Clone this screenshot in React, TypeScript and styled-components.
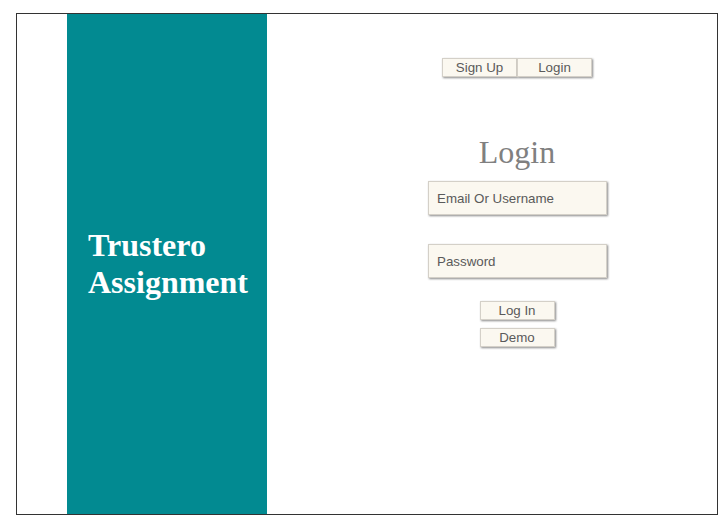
import React from "react";
import styled, { createGlobalStyle } from "styled-components";

const Global = createGlobalStyle`
  html, body { margin: 0; padding: 0; background: #fff; }
  body { font-family: "Liberation Serif", "Times New Roman", serif; }
`;

const Frame = styled.div`
  box-sizing: border-box;
  margin: 13px 0 0 16px;
  width: 702px;
  height: 502px;
  border: 1px solid #333;
  display: flex;
  padding-left: 50px;
  overflow: hidden;
`;

const Brand = styled.div`
  width: 200px;
  flex: none;
  background: #028a91;
  display: flex;
  align-items: center;
  padding-left: 21px;
  box-sizing: border-box;
`;

const BrandTitle = styled.h1`
  margin: 0;
  color: #fff;
  font-family: "Liberation Serif", "Times New Roman", serif;
  font-weight: bold;
  font-size: 32px;
  line-height: 37px;
`;

const Main = styled.div`
  flex: 1;
  padding-left: 50px;
  display: flex;
  flex-direction: column;
  align-items: center;
`;

const Tabs = styled.div`
  display: flex;
  margin-top: 44px;
`;

const CreamButton = styled.button<{ $w?: number }>`
  box-sizing: border-box;
  width: ${(p) => p.$w ?? 75}px;
  height: 19px;
  padding: 0;
  background: #fbf8f0;
  border: 1px solid #d4d0c8;
  box-shadow: 1px 1px 2px #8a8a8a;
  font-family: "Liberation Sans", Arial, sans-serif;
  font-size: 13.333px;
  line-height: 15px;
  color: #5a5a5a;
  cursor: pointer;
`;

const Title = styled.h2`
  margin: 57px 0 0;
  font-family: "Liberation Serif", "Times New Roman", serif;
  font-weight: normal;
  font-size: 32px;
  line-height: 37px;
  color: #808080;
`;

const Field = styled.input<{ $mt: number }>`
  box-sizing: border-box;
  width: 179px;
  height: 34px;
  margin-top: ${(p) => p.$mt}px;
  margin-left: 1px;
  padding: 0 8px;
  background: #fbf8f0;
  border: 1px solid #d4d0c8;
  box-shadow: 1px 1px 2px #8a8a8a;
  font-family: "Liberation Sans", Arial, sans-serif;
  font-size: 13.333px;
  color: #5a5a5a;
  outline: none;
  &::placeholder { color: #5a5a5a; }
`;

const Actions = styled.div`
  display: flex;
  flex-direction: column;
  align-items: center;
  gap: 8px;
  margin-top: 23px;
`;

export default function App() {
  return (
    <>
      <Global />
      <Frame>
        <Brand>
          <BrandTitle>
            Trustero
            <br />
            Assignment
          </BrandTitle>
        </Brand>
        <Main>
          <Tabs>
            <CreamButton>Sign Up</CreamButton>
            <CreamButton>Login</CreamButton>
          </Tabs>
          <Title>Login</Title>
          <Field $mt={10} placeholder="Email Or Username" />
          <Field $mt={29} type="password" placeholder="Password" />
          <Actions>
            <CreamButton>Log In</CreamButton>
            <CreamButton>Demo</CreamButton>
          </Actions>
        </Main>
      </Frame>
    </>
  );
}
